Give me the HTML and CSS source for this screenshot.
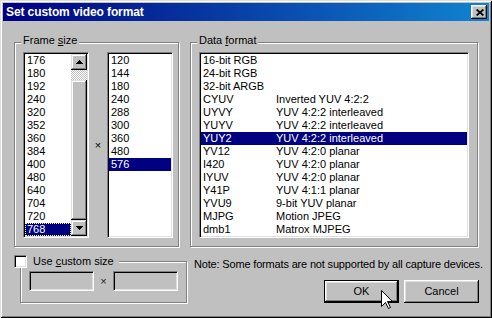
FILE: index.html
```html
<!DOCTYPE html>
<html>
<head>
<meta charset="utf-8">
<title>Set custom video format</title>
<link rel="stylesheet" href="styles.css">
</head>
<body>
<div class="window">
  <div class="titlebar">
    <span class="title">Set custom video format</span>
    <div class="close">
      <svg width="8" height="7" viewBox="0 0 8 7"><path d="M0.6 0.5 L7.4 6.5 M7.4 0.5 L0.6 6.5" stroke="#000" stroke-width="1.7" fill="none"/></svg>
    </div>
  </div>
  <div class="content">
    <div class="groups">
      <div class="group group-frame">
        <div class="glabel">Frame <u>s</u>ize</div>
        <div class="gbox frame-box">
          <div class="listbox list-w">
            <div class="items">
              <div class="row">176</div>
              <div class="row">180</div>
              <div class="row">192</div>
              <div class="row">240</div>
              <div class="row">320</div>
              <div class="row">352</div>
              <div class="row">360</div>
              <div class="row">384</div>
              <div class="row">400</div>
              <div class="row">480</div>
              <div class="row">640</div>
              <div class="row">704</div>
              <div class="row">720</div>
              <div class="row sel focus">768</div>
            </div>
            <div class="scrollbar">
              <div class="sb-btn"><svg width="7" height="4" viewBox="0 0 7 4" shape-rendering="crispEdges"><path d="M3 0h1v1h1v1h1v1h1v1H0V3h1V2h1V1h1z" fill="#000"/></svg></div>
              <div class="sb-track"></div>
              <div class="sb-thumb"></div>
              <div class="sb-btn"><svg width="7" height="4" viewBox="0 0 7 4" shape-rendering="crispEdges"><path d="M0 0h7v1H6v1H5v1H4v1H3V3H2V2H1V1H0z" fill="#000"/></svg></div>
            </div>
          </div>
          <div class="times">×</div>
          <div class="listbox list-h">
            <div class="row">120</div>
            <div class="row">144</div>
            <div class="row">180</div>
            <div class="row">240</div>
            <div class="row">288</div>
            <div class="row">300</div>
            <div class="row">360</div>
            <div class="row">480</div>
            <div class="row sel">576</div>
          </div>
        </div>
      </div>
      <div class="group group-data">
        <div class="glabel">Data <u>f</u>ormat</div>
        <div class="gbox data-box">
          <div class="listbox list-data">
            <div class="drow"><span>16-bit RGB</span><span></span></div>
            <div class="drow"><span>24-bit RGB</span><span></span></div>
            <div class="drow"><span>32-bit ARGB</span><span></span></div>
            <div class="drow"><span>CYUV</span><span>Inverted YUV 4:2:2</span></div>
            <div class="drow"><span>UYVY</span><span>YUV 4:2:2 interleaved</span></div>
            <div class="drow"><span>YUYV</span><span>YUV 4:2:2 interleaved</span></div>
            <div class="drow sel"><span>YUY2</span><span>YUV 4:2:2 interleaved</span></div>
            <div class="drow"><span>YV12</span><span>YUV 4:2:0 planar</span></div>
            <div class="drow"><span>I420</span><span>YUV 4:2:0 planar</span></div>
            <div class="drow"><span>IYUV</span><span>YUV 4:2:0 planar</span></div>
            <div class="drow"><span>Y41P</span><span>YUV 4:1:1 planar</span></div>
            <div class="drow"><span>YVU9</span><span>9-bit YUV planar</span></div>
            <div class="drow"><span>MJPG</span><span>Motion JPEG</span></div>
            <div class="drow"><span>dmb1</span><span>Matrox MJPEG</span></div>
          </div>
        </div>
      </div>
    </div>
    <div class="bottom">
      <div class="custom">
        <div class="chead"><span class="checkbox"></span><span class="clabel">Use <u>c</u>ustom size</span></div>
        <div class="gbox custom-box">
          <div class="edit"></div>
          <div class="times small">×</div>
          <div class="edit"></div>
        </div>
      </div>
      <div class="side">
        <div class="note">Note: Some formats are not supported by all capture devices.</div>
        <div class="buttons">
          <div class="btn default">OK</div>
          <div class="btn">Cancel</div>
        </div>
      </div>
    </div>
  </div>
  <svg class="cursor" width="13" height="20" viewBox="0 0 13 20"><path d="M0.5 0.5 L0.5 16.5 L4.5 12.5 L7.5 18.5 L9.5 17.5 L6.5 11.5 L11.5 11.5 Z" fill="#fff" stroke="#000" stroke-width="1" stroke-linejoin="miter"/></svg>
</div>
</body>
</html>
```

FILE: styles.css
```css
* { box-sizing: border-box; }

html, body {
  margin: 0;
  padding: 0;
}

body {
  width: 492px;
  height: 318px;
  overflow: hidden;
  background: #c0c0c0;
  font-family: "Liberation Sans", Arial, sans-serif;
  font-size: 11px;
  line-height: 13px;
  color: #000;
}

.window {
  position: relative;
  width: 492px;
  height: 318px;
  padding: 3px;
  background: #c0c0c0;
  box-shadow: inset 1px 1px #dfdfdf, inset -1px -1px #000, inset 2px 2px #fff, inset -2px -2px #808080;
  display: flex;
  flex-direction: column;
}

.titlebar {
  height: 18px;
  flex: none;
  display: flex;
  align-items: center;
  justify-content: space-between;
  padding: 0 2px 0 3px;
  background: linear-gradient(to right, #000080, #1084d0);
}

.title {
  color: #fff;
  font-weight: bold;
  font-size: 12px;
  letter-spacing: -0.1px;
  line-height: 18px;
  white-space: nowrap;
}

.close {
  width: 16px;
  height: 14px;
  background: #c0c0c0;
  box-shadow: inset -1px -1px #000, inset 1px 1px #fff, inset -2px -2px #808080, inset 2px 2px #dfdfdf;
  display: flex;
  align-items: center;
  justify-content: center;
  padding-left: 1px;
}

.close svg { display: block; }

.content {
  flex: 1;
  padding: 13px 10px 0 11px;
  display: flex;
  flex-direction: column;
}

.groups {
  display: flex;
  gap: 11px;
}

.group {
  display: flex;
  flex-direction: column;
}

.group-frame { width: 165px; }
.group-data { width: 288px; }

.glabel {
  align-self: flex-start;
  margin-left: 7px;
  padding: 0 2px;
  height: 13px;
  margin-bottom: -5px;
  background: #c0c0c0;
  position: relative;
  z-index: 1;
  white-space: nowrap;
}

.gbox {
  border: 1px solid #808080;
  box-shadow: inset 1px 1px #fff, 1px 1px #fff;
}

.frame-box {
  display: flex;
  align-items: center;
  padding: 9px 5px 8px 8px;
}

.data-box {
  padding: 9px 8px 8px 8px;
}

.listbox {
  height: 186px;
  background: #fff;
  border: 1px solid;
  border-color: #808080 #fff #fff #808080;
  padding: 1px;
  box-shadow: inset 1px 1px #000, inset -1px -1px #dfdfdf;
}

.list-w {
  width: 66px;
  display: flex;
}

.list-h {
  width: 66px;
}

.items {
  flex: 1;
  min-width: 0;
}

.row {
  height: 13px;
  padding-left: 2px;
  white-space: nowrap;
}

.sel {
  background: #000080;
  color: #fff;
}

.focus {
  outline: 1px dotted #ffff80;
  outline-offset: -1px;
}

.scrollbar {
  width: 16px;
  display: flex;
  flex-direction: column;
}

.sb-btn {
  height: 16px;
  flex: none;
  background: #c0c0c0;
  box-shadow: inset -1px -1px #000, inset 1px 1px #dfdfdf, inset -2px -2px #808080, inset 2px 2px #fff;
  display: flex;
  align-items: center;
  justify-content: center;
}

.sb-btn svg { display: block; }

.sb-track {
  height: 10px;
  flex: none;
  background: repeating-conic-gradient(#c0c0c0 0 25%, #fff 0 50%) 0 0 / 2px 2px;
}

.sb-thumb {
  flex: 1;
  background: #c0c0c0;
  box-shadow: inset -1px -1px #000, inset 1px 1px #dfdfdf, inset -2px -2px #808080, inset 2px 2px #fff;
}

.times {
  width: 18px;
  text-align: center;
  flex: none;
}

.times.small { width: 19px; color: #202020; }

.list-data {
  width: 270px;
}

.drow {
  height: 13px;
  padding-left: 2px;
  display: grid;
  grid-template-columns: 73px 1fr;
  white-space: nowrap;
}

.bottom {
  display: flex;
  margin-top: 8px;
}

.custom {
  display: flex;
  flex-direction: column;
  flex: none;
}

.chead {
  align-self: flex-start;
  display: flex;
  align-items: center;
  gap: 6px;
  height: 13px;
  padding-right: 5px;
  margin-bottom: -7px;
  background: #c0c0c0;
  position: relative;
  z-index: 1;
  white-space: nowrap;
}

.checkbox {
  width: 13px;
  height: 13px;
  background: #fff;
  border: 1px solid;
  border-color: #808080 #fff #fff #808080;
  box-shadow: inset 1px 1px #000, inset -1px -1px #dfdfdf;
}

.custom-box {
  margin-left: 6px;
  display: flex;
  align-items: center;
  padding: 9px 8px 11px 8px;
}

.edit {
  width: 65px;
  height: 20px;
  background: #c0c0c0;
  border: 1px solid;
  border-color: #808080 #fff #fff #808080;
  box-shadow: inset 1px 1px #000, inset -1px -1px #dfdfdf;
}

.side {
  flex: 1;
  min-width: 0;
  margin-left: 7px;
  padding-top: 3px;
  display: flex;
  flex-direction: column;
}

.note {
  white-space: nowrap;
  height: 13px;
  letter-spacing: -0.17px;
}

.buttons {
  margin-top: 9px;
  display: flex;
  justify-content: flex-end;
  gap: 5px;
}

.btn {
  width: 75px;
  height: 23px;
  flex: none;
  background: #c0c0c0;
  box-shadow: inset -1px -1px #000, inset 1px 1px #fff, inset -2px -2px #808080, inset 2px 2px #dfdfdf;
  display: flex;
  align-items: center;
  justify-content: center;
}

.btn.default {
  border: 1px solid #000;
}

.cursor {
  position: absolute;
  left: 381px;
  top: 290px;
  display: block;
}
```
